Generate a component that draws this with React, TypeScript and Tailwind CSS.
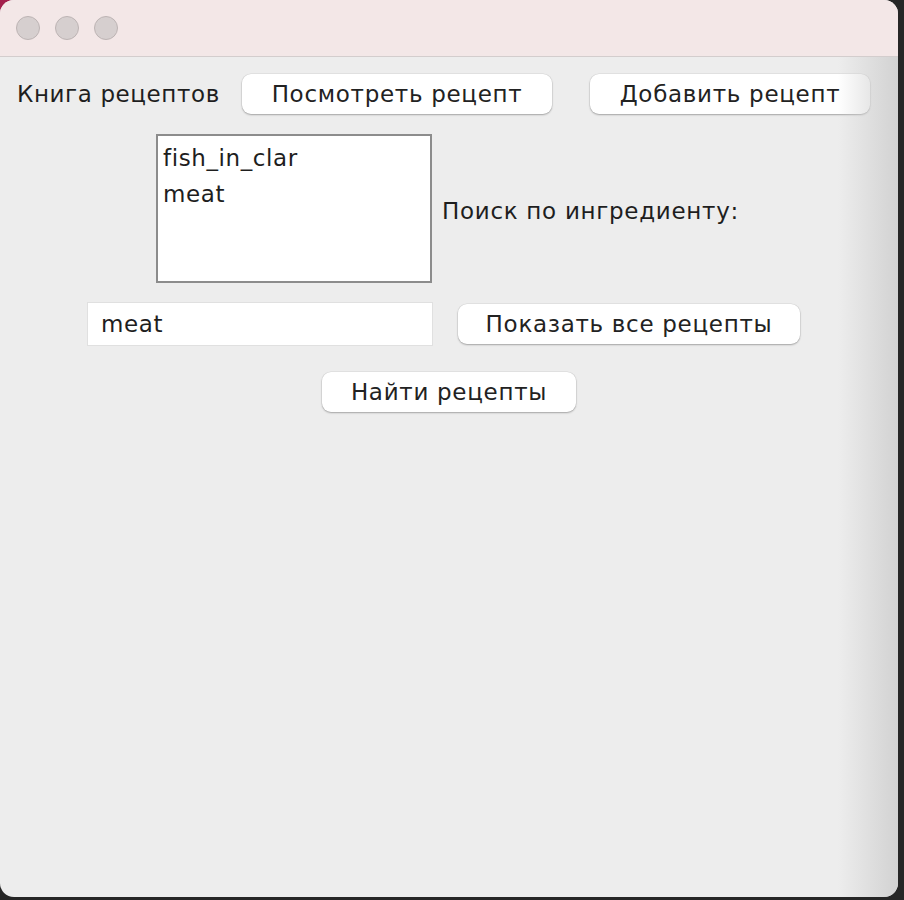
import React from "react";

const font = { fontFamily: '"DejaVu Sans", "Open Sans", sans-serif' };

function Btn({ w, children }: { w: string; children: React.ReactNode }) {
  return (
    <div
      className={`${w} h-[40px] flex items-center justify-center rounded-[9px] bg-white text-[23px] tracking-[0.7px] text-[#222] shadow-[0_1px_2px_rgba(0,0,0,0.28),0_0_0_0.5px_rgba(0,0,0,0.08)]`}
    >
      {children}
    </div>
  );
}

export default function App() {
  return (
    <div className="w-[904px] h-[900px] bg-[#262626] relative overflow-hidden" style={font}>
      <div className="absolute left-0 top-0 w-[40px] h-[40px] bg-[#a3204c]" />
      <div className="relative w-[898px] h-[897px] rounded-[14px] overflow-hidden bg-[#ededed] flex flex-col">
        <div className="h-[57px] bg-[#f3e7e7] border-b border-[#d3cdcd] flex items-center gap-[15px] pl-[16px] shrink-0">
          <div className="w-[24px] h-[24px] rounded-full bg-[#d6cfcf] border border-[#bdb4b4]" />
          <div className="w-[24px] h-[24px] rounded-full bg-[#d6cfcf] border border-[#bdb4b4]" />
          <div className="w-[24px] h-[24px] rounded-full bg-[#d6cfcf] border border-[#bdb4b4]" />
        </div>
        <div className="flex-1 relative text-[#1e1e1e] text-[23px] tracking-[0.6px]">
          <div className="flex items-center pt-[17px] pl-[17px]">
            <span className="w-[225px]">Книга рецептов</span>
            <Btn w="w-[310px]">Посмотреть рецепт</Btn>
            <div className="w-[38px]" />
            <Btn w="w-[280px]">Добавить рецепт</Btn>
          </div>
          <div className="flex items-center pt-[20px] pl-[156px]">
            <div className="w-[276px] h-[149px] bg-white border-2 border-[#8c8c8c] px-[5px] pt-[4px] leading-[36px]">
              <div>fish_in_clar</div>
              <div>meat</div>
            </div>
            <span className="ml-[10px] mt-[6px] tracking-[0.7px]">Поиск по ингредиенту:</span>
          </div>
          <div className="flex items-center pt-[19px] pl-[87px]">
            <div className="w-[346px] h-[44px] bg-white border border-[#e0e0e0] flex items-center pl-[13px]">
              meat
            </div>
            <div className="w-[25px]" />
            <Btn w="w-[342px]">Показать все рецепты</Btn>
          </div>
          <div className="flex justify-center pt-[26px]">
            <Btn w="w-[254px]">Найти рецепты</Btn>
          </div>
          <div className="absolute right-0 top-0 bottom-0 w-[60px] bg-gradient-to-r from-transparent to-[#d2d2d2] pointer-events-none" />
        </div>
      </div>
    </div>
  );
}
